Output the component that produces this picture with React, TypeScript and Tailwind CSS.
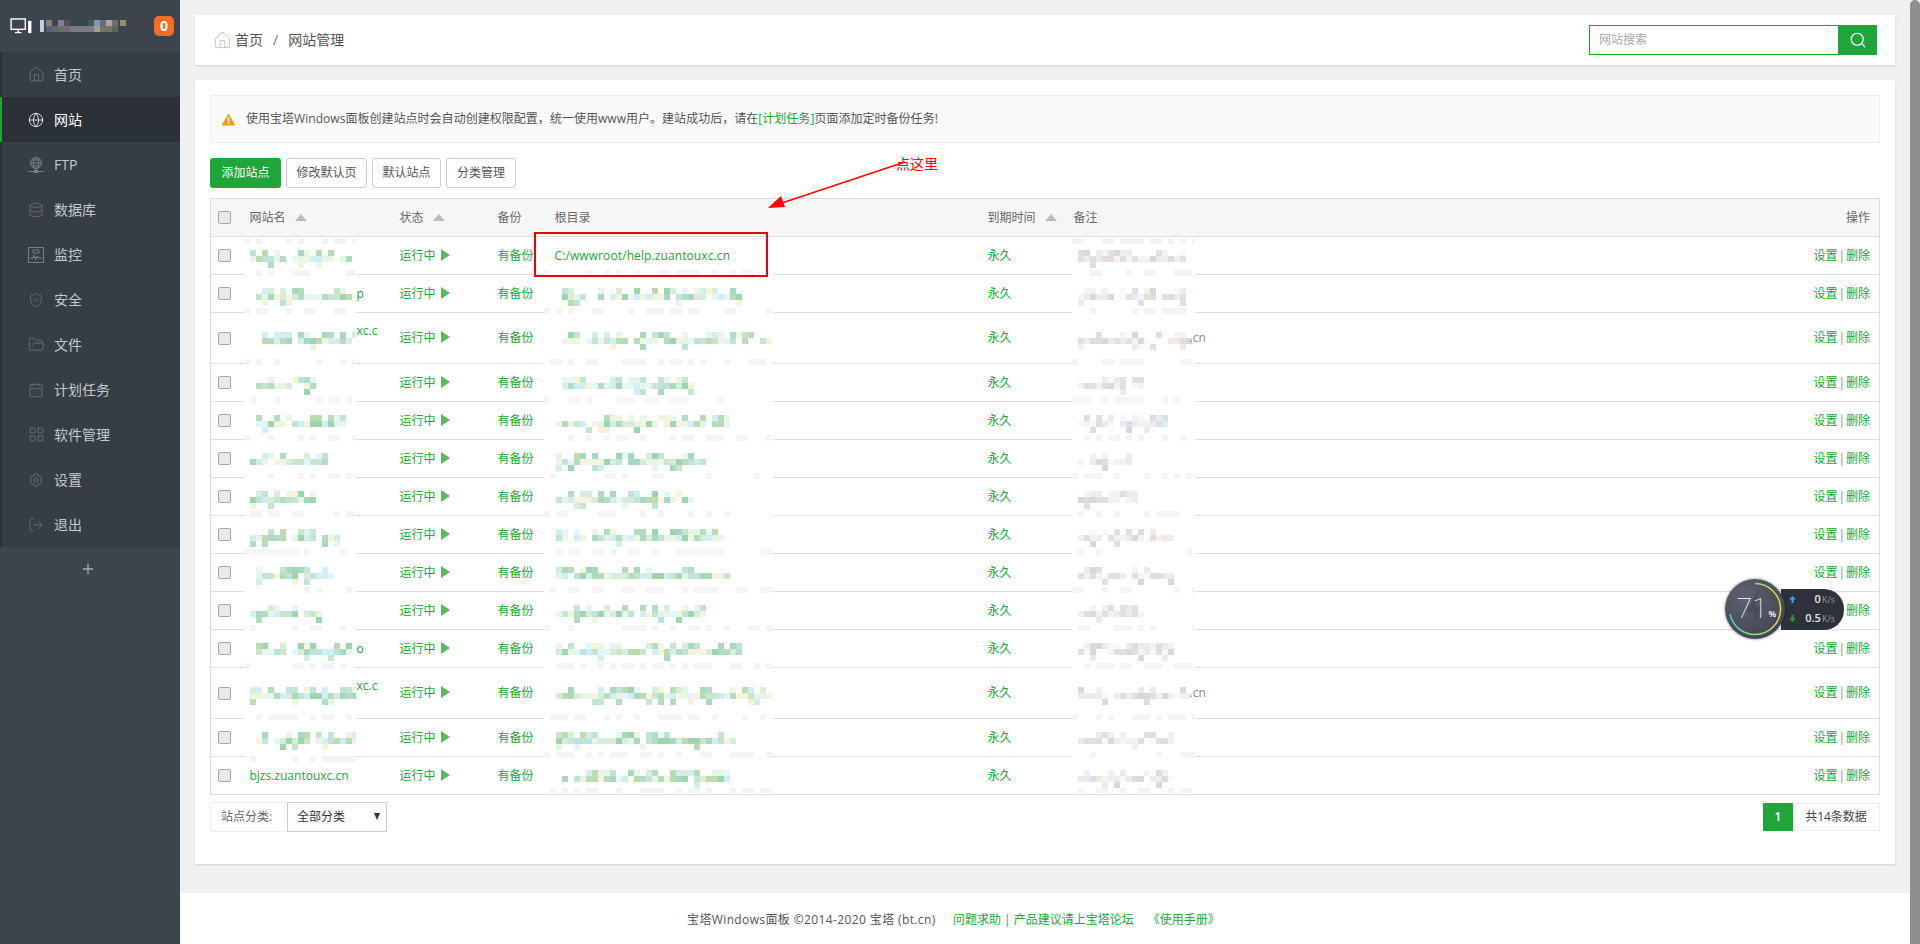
import { CalendarDays, Database, FolderOpen, Globe, House, LayoutGrid, LogOut, Plus, Search, Settings, ShieldCheck } from "lucide-react";
import type { ReactNode } from "react";

const FtpIcon = () => (
  <svg viewBox="0 0 16 16" className="w-4 h-4" fill="none" stroke="currentColor" strokeWidth="1">
    <circle cx="8" cy="6" r="5.5" />
    <ellipse cx="8" cy="6" rx="2.5" ry="5.5" />
    <path d="M2.5 6h11M3.5 3h9M3.5 9h9M8 11.5v2M0 14.5h6M10 14.5h6" />
    <rect x="6.5" y="13.5" width="3" height="2" fill="currentColor" />
  </svg>
);

const MonitorChartIcon = () => (
  <svg viewBox="0 0 16 16" className="w-4 h-4" fill="none" stroke="currentColor" strokeWidth="1">
    <rect x="0.5" y="0.5" width="15" height="15" />
    <path d="M2 11h3l1-3 1.5 5 1.5-4 1 2h4M5 3h6v3H5z" />
  </svg>
);

const menu: { label: string; icon: ReactNode; active?: boolean }[] = [
  { label: "首页", icon: <House size={17} strokeWidth={1} /> },
  { label: "网站", icon: <Globe size={16} strokeWidth={1.2} />, active: true },
  { label: "FTP", icon: <FtpIcon /> },
  { label: "数据库", icon: <Database size={16} strokeWidth={1} /> },
  { label: "监控", icon: <MonitorChartIcon /> },
  { label: "安全", icon: <ShieldCheck size={16} strokeWidth={1} /> },
  { label: "文件", icon: <FolderOpen size={17} strokeWidth={1} /> },
  { label: "计划任务", icon: <CalendarDays size={16} strokeWidth={1} /> },
  { label: "软件管理", icon: <LayoutGrid size={17} strokeWidth={1} /> },
  { label: "设置", icon: <Settings size={16} strokeWidth={1} /> },
  { label: "退出", icon: <LogOut size={16} strokeWidth={1} /> },
];

const greens = ["#b4dcc0", "#c8e6cf", "#d7ecd9", "#eef5e0", "#9ed4ae", "#bfe3d8", "#d2eef2", "#f4f3dc", "#e6f4ea", "#bcdcb0", "#a8d8c0", "#e4f6f8"];
const grays = ["#e2dedd", "#e8ebf0", "#d9dce1", "#f0eae5", "#f2f2f2", "#dcdfe4", "#ececec", "#e4dfdb", "#f6f3ee", "#d6d8dd", "#f8f8f8", "#eef0f3"];

// 打码的色块，种子固定，每次画出来都一样
function Mosaic({ left, patchX, width, height, from, to, seed, tone, first, last }: {
  left: number; patchX: number; width: number; height: number; from: number; to: number; seed: number;
  tone: "green" | "gray"; first?: boolean; last?: boolean;
}) {
  let s = seed * 7919 + 13;
  const next = () => {
    s = (s * 16807) % 2147483647;
    return (s % 1000) / 1000;
  };
  const top = first ? 1 : -5;
  const h = height - top + (last ? -2 : 5);
  const mid = height / 2 - top;
  const rowMain = Math.floor(mid / 6) * 6;
  const palette = tone === "green" ? greens : grays;
  const blocks: ReactNode[] = [];
  for (let x = 0; x < width; x += 6) {
    const inText = patchX + x >= from && patchX + x + 6 <= to + 3;
    for (let y = 0; y < h; y += 6) {
      const r = next();
      const c = palette[Math.floor(next() * palette.length)];
      let fill = "";
      if (inText && y === rowMain) {
        if (r < 0.92) fill = c;
      } else if (inText && y === rowMain - 6) {
        if (r < 0.5) fill = c;
      } else if (inText && y === rowMain + 6) {
        if (r < 0.15) fill = c;
      } else if (y < 6 || y >= h - 6) {
        if (r < 0.4) fill = "#f4f4f4";
      }
      if (fill) blocks.push(<rect key={`${x}-${y}`} x={x} y={y} width="6" height="6" fill={fill} />);
    }
  }
  return (
    <svg className="absolute z-10" style={{ left, top, width, height: h }} viewBox={`0 0 ${width} ${h}`} shapeRendering="crispEdges">
      <rect width={width} height={h} fill="#fff" />
      {blocks}
    </svg>
  );
}

type Site = {
  tall?: boolean;
  name: [number, number] | null;
  nameTail?: string;
  root: [number, number] | null;
  remark: [number, number];
  remarkTail?: boolean;
};

const sites: Site[] = [
  { name: [245, 352], root: null, remark: [1074, 1188] },
  { name: [253, 353], nameTail: "p", root: [557, 743], remark: [1078, 1188] },
  { tall: true, name: [257, 355], nameTail: "xc.c", root: [557, 769], remark: [1078, 1190], remarkTail: true },
  { name: [251, 312], root: [557, 692], remark: [1078, 1145] },
  { name: [251, 343], root: [551, 729], remark: [1074, 1169] },
  { name: [245, 324], root: [551, 704], remark: [1074, 1129] },
  { name: [245, 312], root: [551, 692], remark: [1078, 1139] },
  { name: [245, 337], root: [551, 720], remark: [1074, 1176] },
  { name: [251, 333], root: [551, 726], remark: [1074, 1176] },
  { name: [245, 318], root: [551, 702], remark: [1078, 1145] },
  { name: [251, 353], nameTail: "o", root: [551, 741], remark: [1078, 1176] },
  { tall: true, name: [245, 355], nameTail: "xc.c", root: [551, 769], remark: [1078, 1190], remarkTail: true },
  { name: [251, 355], root: [551, 732], remark: [1074, 1176] },
  { name: null, root: [557, 731], remark: [1074, 1176] },
];

const SortArrow = () => <span className="inline-block ml-[9px] w-0 h-0 border-x-[6px] border-x-transparent border-b-[7px] border-b-[#bbbbbb] align-[1px]" />;

const Check = () => <input type="checkbox" className="appearance-none block w-[13px] h-[13px] border border-[#a6a6a6] rounded-[2px] bg-[#e9e9e9]" />;

export default function App() {
  return (
    <div className="relative flex h-screen overflow-hidden text-xs [font-family:'Open_Sans','Noto_Sans_CJK_SC',sans-serif] text-[#666]">
      {/* 左侧菜单 */}
      <aside className="w-[180px] shrink-0 bg-[#3c444d] flex flex-col">
        <div className="h-[52px] flex items-center pl-[10px] pr-[6px] text-white">
          <svg viewBox="0 0 24 18" className="w-[23px] h-[17px]" fill="none" stroke="currentColor" strokeWidth="1.5">
            <rect x="1" y="1" width="15" height="11" />
            <path d="M5 15.5h7M8.5 12v3" />
            <rect x="19" y="3" width="3.5" height="13" fill="currentColor" stroke="none" />
          </svg>
          <svg viewBox="0 0 87 12" className="ml-[7px] w-[87px] h-[12px]" shapeRendering="crispEdges">
            <rect x="0" y="0" width="4" height="12" fill="#c8ccd8" />
            <rect x="6" y="0" width="6" height="6" fill="#8a8078" /><rect x="6" y="6" width="6" height="6" fill="#55607a" />
            <rect x="12" y="6" width="6" height="6" fill="#66675f" /><rect x="18" y="0" width="6" height="6" fill="#887f90" />
            <rect x="18" y="6" width="12" height="6" fill="#6f6a78" /><rect x="24" y="0" width="6" height="6" fill="#54505f" />
            <rect x="30" y="6" width="24" height="6" fill="#7a7d85" /><rect x="48" y="0" width="6" height="6" fill="#4a525c" />
            <rect x="54" y="0" width="6" height="6" fill="#8098ad" /><rect x="54" y="6" width="6" height="6" fill="#a89c90" />
            <rect x="60" y="0" width="6" height="6" fill="#6a6a80" /><rect x="60" y="6" width="12" height="6" fill="#77736a" />
            <rect x="66" y="0" width="6" height="6" fill="#ada5a0" /><rect x="72" y="0" width="6" height="6" fill="#70706a" />
            <rect x="72" y="6" width="6" height="6" fill="#5c6460" /><rect x="80" y="0" width="6" height="6" fill="#958a70" />
          </svg>
          <span className="ml-auto w-5 h-5 rounded-[5px] bg-[#f96c22] flex items-center justify-center text-[14px] font-bold">0</span>
        </div>
        <nav className="border-l-2 border-[#2c3038] bg-[#363e45]">
          {menu.map((m) => (
            <div
              key={m.label}
              className={`relative h-[45px] flex items-center pl-[26px] text-sm ${m.active ? "bg-[#2c3138] text-white" : "text-[#c4c8cc]"}`}
            >
              {m.active && <span className="absolute -left-[2px] top-0 bottom-0 w-[2px] bg-[#20a53a]" />}
              <span className={`w-[26px] flex ${m.active ? "text-white" : "text-[#7a7f85]"}`}>{m.icon}</span>
              {m.label}
            </div>
          ))}
        </nav>
        <div className="h-[43px] flex items-center justify-center pr-[5px] text-[#a9adb2]">
          <Plus size={16} strokeWidth={2} />
        </div>
      </aside>

      {/* 主内容 */}
      <main className="flex-1 flex flex-col bg-[#f0f0f0]">
        <div className="flex-1 px-[15px] pt-[15px]">
          <div className="h-[50px] bg-white shadow-[0_1px_2px_rgba(0,0,0,0.12)] flex items-center pl-[18px] pr-[18px] text-sm text-[#555]">
            <House size={19} strokeWidth={1} className="text-[#b5b5b5]" />
            <span className="ml-[3px]">首页</span>
            <span className="mx-[10px] text-[#777]">/</span>
            <span>网站管理</span>
            <div className="ml-auto flex h-[30px] w-[288px]">
              <input
                placeholder="网站搜索"
                className="flex-1 min-w-0 border border-[#20a53a] border-r-0 pl-[9px] text-xs outline-none placeholder:text-[#aaa]"
              />
              <span className="w-[39px] bg-[#20a53a] flex items-center justify-center text-white">
                <Search size={18} strokeWidth={1.6} />
              </span>
            </div>
          </div>

          <div className="relative mt-[15px] h-[784px] bg-white shadow-[0_1px_2px_rgba(0,0,0,0.12)] pt-[15px] px-[15px]">
            <div className="h-[48px] bg-[#fafafa] border border-[#eeeeee] flex items-center pl-[10px] text-[#555]">
              <svg viewBox="0 0 16 14" className="w-[15px] h-[13px]">
                <path d="M8 0.5L15.5 13.5H0.5Z" fill="#f39c12" />
                <path d="M7.2 4.5h1.6v5H7.2zM7.2 10.3h1.6v1.6H7.2z" fill="#fff" />
              </svg>
              <span className="ml-[10px] tracking-[0.03px]">
                使用宝塔Windows面板创建站点时会自动创建权限配置，统一使用www用户。建站成功后，请在<span className="text-[#20a53a]">[计划任务]</span>页面添加定时备份任务!
              </span>
            </div>

            <div className="mt-[15px] flex gap-[5px]">
              <button className="h-[30px] w-[71px] rounded-[3px] bg-[#20a53a] text-white">添加站点</button>
              <button className="h-[30px] w-[81px] rounded-[3px] bg-white border border-[#cccccc] text-[#555]">修改默认页</button>
              <button className="h-[30px] w-[69px] rounded-[3px] bg-white border border-[#cccccc] text-[#555]">默认站点</button>
              <button className="h-[30px] w-[70px] rounded-[3px] bg-white border border-[#cccccc] text-[#555]">分类管理</button>
            </div>

            <table className="mt-[10px] w-full table-fixed border-collapse border border-[#dddddd]">
              <colgroup>
                <col className="w-[31px]" />
                <col className="w-[150px]" />
                <col className="w-[98px]" />
                <col className="w-[57px]" />
                <col className="w-[433px]" />
                <col className="w-[86px]" />
                <col />
                <col className="w-[120px]" />
              </colgroup>
              <thead>
                <tr className="h-[38px] bg-[#f6f6f6] text-left border-b border-[#dddddd]">
                  <th className="pl-[7px] font-normal"><Check /></th>
                  <th className="pl-[8px] font-normal">网站名<SortArrow /></th>
                  <th className="pl-[8px] font-normal">状态<SortArrow /></th>
                  <th className="pl-[8px] font-normal">备份</th>
                  <th className="pl-[8px] font-normal">根目录</th>
                  <th className="pl-[8px] font-normal">到期时间<SortArrow /></th>
                  <th className="pl-[8px] font-normal">备注</th>
                  <th className="pr-[9px] font-normal text-right">操作</th>
                </tr>
              </thead>
              <tbody>
                {sites.map((site, i) => {
                  const h = site.tall ? 51 : 38;
                  const first = i === 0;
                  const last = i === sites.length - 1;
                  return (
                    <tr key={i} className={`border-b border-[#dddddd] ${site.tall ? "h-[51px]" : "h-[38px]"}`}>
                      <td className="pl-[7px]"><Check /></td>
                      <td className="relative pl-[8px] text-[#20a53a]">
                        {site.name ? (
                          <>
                            <Mosaic left={2} patchX={243} width={112} height={h} from={site.name[0]} to={site.name[1]} seed={i + 1} tone="green" first={first} last={last} />
                            {site.nameTail && <span className={`relative z-20 block pl-[107px] whitespace-nowrap ${site.tall ? "pb-[14px]" : ""}`}>{site.nameTail}</span>}
                          </>
                        ) : "bjzs.zuantouxc.cn"}
                      </td>
                      <td className="pl-[8px] text-[#20a53a]">
                        运行中
                        <span className="inline-block ml-[5px] w-0 h-0 border-y-[6px] border-y-transparent border-l-[9px] border-l-[#5cb85c] align-[-1px]" />
                      </td>
                      <td className="pl-[8px] text-[#20a53a]">有备份</td>
                      <td className="relative pl-[8px] text-[#20a53a]">
                        {site.root ? (
                          <Mosaic left={-3} patchX={543} width={229} height={h} from={site.root[0]} to={site.root[1]} seed={i + 31} tone="green" first={first} last={last} />
                        ) : <span className="tracking-[0.1px]">C:/wwwroot/help.zuantouxc.cn</span>}
                      </td>
                      <td className="pl-[8px] text-[#20a53a]">永久</td>
                      <td className="relative pl-[8px]">
                        <Mosaic left={6} patchX={1072} width={123} height={h} from={site.remark[0]} to={site.remark[1]} seed={i + 61} tone="gray" first={first} last={last} />
                        {site.remarkTail && <span className="relative z-20 block pl-[116px] text-[#888]">.cn</span>}
                      </td>
                      <td className="pr-[9px] text-right text-[#20a53a]">
                        设置<span className="mx-[1px] text-[#888]">|</span>删除
                      </td>
                    </tr>
                  );
                })}
              </tbody>
            </table>

            <div className="mt-[7px] flex items-center justify-between">
              <div className="flex h-[30px]">
                <span className="w-[77px] border border-r-0 border-[#eeeeee] flex items-center pl-[10px]">站点分类:</span>
                <div className="relative">
                  <select className="appearance-none w-[100px] h-[30px] border border-[#cccccc] bg-white pl-[9px] text-[#333] outline-none">
                    <option>全部分类</option>
                  </select>
                  <span className="absolute right-[7px] top-[11px] w-0 h-0 border-x-[3.5px] border-x-transparent border-t-[7px] border-t-[#333]" />
                </div>
              </div>
              <div className="flex h-[28px]">
                <span className="w-[30px] bg-[#20a53a] text-white font-semibold flex items-center justify-center">1</span>
                <span className="w-[87px] border border-l-0 border-[#eeeeee] text-[#444] flex items-center justify-center">共14条数据</span>
              </div>
            </div>

            {/* 标注：红框、箭头和文字 */}
            <div className="absolute left-[339px] top-[152px] w-[234px] h-[45px] border-2 border-[#e60012] z-20" />
            <svg className="absolute left-[560px] top-[70px] z-20 w-[160px] h-[70px]" viewBox="0 0 160 70" fill="none">
              <path d="M150 12L24 54" stroke="#f00" strokeWidth="1.5" />
              <path d="M13 58L26 46L30 57Z" fill="#f00" />
            </svg>
            <span className="absolute left-[701px] top-[74px] z-20 text-sm text-[#f00]">点这里</span>
          </div>
        </div>

        <footer className="h-[51px] bg-white flex items-center pl-[507px] pt-[3px] text-[#555]">
          <span className="w-[245px] whitespace-nowrap tracking-[0.38px]">宝塔Windows面板 ©2014-2020 宝塔 (bt.cn)</span>
          <span className="ml-[21px] text-[#20a53a]">问题求助 | 产品建议请上宝塔论坛</span>
          <span className="ml-[14px] text-[#20a53a]">《使用手册》</span>
        </footer>
      </main>

      <div className="w-[10px] shrink-0 bg-[#f0f0f0]">
        <div className="h-full rounded-t-[5px] bg-[#8f8f8f]" />
      </div>

      {/* 悬浮的负载/网速小组件 */}
      <div className="absolute left-[1725px] top-[579px] z-30 flex items-center">
        <div className="relative z-10 w-[60px] h-[60px] rounded-full bg-[radial-gradient(circle_at_35%_30%,#5e6270,#3b3d49)] shadow-[0_0_3px_rgba(0,0,0,0.5)] flex items-center justify-center text-white">
          <svg viewBox="0 0 60 60" className="absolute inset-0 w-full h-full" fill="none">
            <defs>
              <linearGradient id="arc" x1="0" y1="0" x2="0" y2="1">
                <stop offset="0" stopColor="#45d6c5" />
                <stop offset="0.6" stopColor="#9be07a" />
                <stop offset="1" stopColor="#e8d94a" />
              </linearGradient>
            </defs>
            <path d="M33 10L22 33h7l-2 18 11-24h-7z" fill="#4a4d59" />
            <circle cx="30" cy="30" r="25.5" stroke="url(#arc)" strokeWidth="1.5" strokeDasharray="113.8 160.2" transform="rotate(-90 30 30)" />
          </svg>
          <span className="relative ml-[3px] text-[28px] font-thin leading-none [font-family:Roboto,sans-serif]">71</span>
          <span className="relative mt-[9px] ml-[1px] text-[9px] font-semibold">%</span>
        </div>
        <div className="-ml-[4px] w-[63px] h-[41px] rounded-r-[20px] bg-[#2e313b] flex flex-col justify-center gap-[4px] pl-[8px] pr-[9px] text-[#e8e8e8]">
          <div className="flex items-center h-[15px]">
            <svg viewBox="0 0 8 8" className="w-[7px] h-[7px]"><path d="M4 0L8 4H5.2V8H2.8V4H0Z" fill="#2ea7f0" /></svg>
            <span className="ml-auto text-[11px] font-semibold">0</span>
            <span className="ml-[1px] text-[9px] text-[#999]">K/s</span>
          </div>
          <div className="flex items-center h-[15px]">
            <svg viewBox="0 0 8 8" className="w-[7px] h-[7px]"><path d="M4 8L8 4H5.2V0H2.8V4H0Z" fill="#20a53a" /></svg>
            <span className="ml-auto text-[11px] font-semibold">0.5</span>
            <span className="ml-[1px] text-[9px] text-[#999]">K/s</span>
          </div>
        </div>
      </div>
    </div>
  );
}
